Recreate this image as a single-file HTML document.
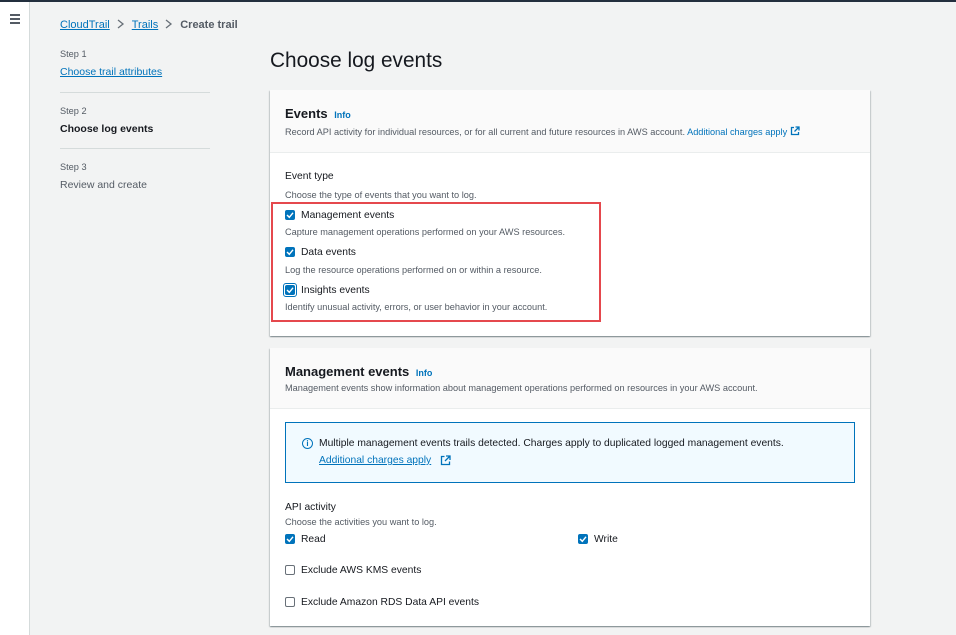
<!DOCTYPE html>
<html><head><meta charset="utf-8"><style>
*{box-sizing:border-box;margin:0;padding:0}
body{width:956px;height:635px;overflow:hidden;background:#f2f3f3;font-family:"Liberation Sans",Arial,sans-serif;color:#16191f;position:relative}
.abs{position:absolute;white-space:nowrap}
a,.link{color:#0073bb;text-decoration:underline}
.top{position:absolute;left:0;top:0;width:956px;height:2px;background:#232f3e}
.side{position:absolute;left:0;top:2px;width:30px;height:633px;background:#fff;border-right:1px solid #d5dbdb}
.card{position:absolute;left:270px;width:600px;background:#fff;box-shadow:0 1px 1px rgba(0,28,36,.3),1px 1px 1px rgba(0,28,36,.15),-1px 1px 1px rgba(0,28,36,.15)}
.hdr{position:absolute;left:0;top:0;width:600px;background:#fafafa;border-bottom:1px solid #eaeded}
.cb{position:absolute;width:10px;height:10px;background:#0073bb;border-radius:2px}
.cb svg{position:absolute;left:1px;top:1px}
.ub{position:absolute;width:10px;height:10px;border:1px solid #687078;border-radius:2px;background:#fff}
.s{font-size:9.2px;color:#545b64}
.l{font-size:10.3px;color:#16191f}
.sep{position:absolute;left:60px;width:150px;height:1px;background:#d5dbdb}
</style></head><body>
<div class="top"></div>
<div class="side"><div style="position:absolute;left:10px;top:12px;width:10px">
<div style="height:1.5px;background:#545b64;margin-bottom:2.5px"></div><div style="height:1.5px;background:#545b64;margin-bottom:2.5px"></div><div style="height:1.5px;background:#545b64"></div></div></div>

<div class="abs" style="left:60px;top:19px;font-size:11px"><span class="link">CloudTrail</span><svg width="22" height="10" style="vertical-align:-1px"><path d="M8 1 L13 5 L8 9" stroke="#687078" stroke-width="1.3" fill="none"/></svg><span class="link">Trails</span><svg width="22" height="10" style="vertical-align:-1px"><path d="M8 1 L13 5 L8 9" stroke="#687078" stroke-width="1.3" fill="none"/></svg><span style="color:#545b64;font-weight:bold">Create trail</span></div>

<div class="abs s" style="left:60px;top:49px">Step 1</div>
<div class="abs link" style="left:60px;top:66px;font-size:10.5px">Choose trail attributes</div>
<div class="sep" style="top:92px"></div>
<div class="abs s" style="left:60px;top:106px">Step 2</div>
<div class="abs" style="left:60px;top:123px;font-size:10.5px;font-weight:bold">Choose log events</div>
<div class="sep" style="top:148px"></div>
<div class="abs s" style="left:60px;top:162px">Step 3</div>
<div class="abs" style="left:60px;top:179px;font-size:10.5px;color:#545b64">Review and create</div>

<div class="abs" style="left:270px;top:49px;font-size:20.8px">Choose log events</div>

<div class="card" style="top:90px;height:246px">
<div class="hdr" style="height:63px"></div>
<div class="abs" style="left:15px;top:16px;font-size:13px;font-weight:bold">Events <span style="font-size:9px;color:#0073bb;margin-left:3px">Info</span></div>
<div class="abs s" style="left:15px;top:36px">Record API activity for individual resources, or for all current and future resources in AWS account. <span style="color:#0073bb">Additional charges apply</span> <svg width="10" height="10" style="vertical-align:-1px"><path d="M4 1.5 H1.5 V8.5 H8.5 V6 M5.5 1 H9 V4.5 M9 1 L4.5 5.5" stroke="#0073bb" stroke-width="1.3" fill="none"/></svg></div>
<div class="abs l" style="left:15px;top:81px">Event type</div>
<div class="abs s" style="left:15px;top:100px">Choose the type of events that you want to log.</div>
<div class="cb" style="left:15px;top:120px"><svg width="8" height="8"><path d="M1 4 L3.3 6.3 L7 1.8" stroke="#fff" stroke-width="1.4" fill="none"/></svg></div>
<div class="abs l" style="left:31px;top:120px">Management events</div>
<div class="abs s" style="left:15px;top:137px">Capture management operations performed on your AWS resources.</div>
<div class="cb" style="left:15px;top:157px"><svg width="8" height="8"><path d="M1 4 L3.3 6.3 L7 1.8" stroke="#fff" stroke-width="1.4" fill="none"/></svg></div>
<div class="abs l" style="left:31px;top:157px">Data events</div>
<div class="abs s" style="left:15px;top:175px">Log the resource operations performed on or within a resource.</div>
<div style="position:absolute;left:13px;top:193px;width:14px;height:14px;border:1.5px solid #0073bb;border-radius:3px"></div>
<div class="cb" style="left:15px;top:195px"><svg width="8" height="8"><path d="M1 4 L3.3 6.3 L7 1.8" stroke="#fff" stroke-width="1.4" fill="none"/></svg></div>
<div class="abs l" style="left:31px;top:195px">Insights events</div>
<div class="abs s" style="left:15px;top:212px">Identify unusual activity, errors, or user behavior in your account.</div>
<div style="position:absolute;left:1px;top:112px;width:330px;height:120px;border:2px solid #e5484d"></div>
</div>

<div class="card" style="top:348px;height:278px">
<div class="hdr" style="height:61px"></div>
<div class="abs" style="left:15px;top:16px;font-size:13px;font-weight:bold">Management events <span style="font-size:9px;color:#0073bb;margin-left:3px">Info</span></div>
<div class="abs s" style="left:15px;top:35px">Management events show information about management operations performed on resources in your AWS account.</div>
<div style="position:absolute;left:15px;top:74px;width:570px;height:61px;background:#f1faff;border:1px solid #0073bb"></div>
<div style="position:absolute;left:32px;top:90px;width:11px;height:11px;border:1.3px solid #0073bb;border-radius:50%;color:#0073bb;font-size:8px;font-weight:bold;text-align:center;line-height:9px">i</div>
<div class="abs l" style="left:49px;top:90px">Multiple management events trails detected. Charges apply to duplicated logged management events.</div>
<div class="abs link" style="left:49px;top:107px;font-size:10.3px">Additional charges apply</div>
<svg class="abs" style="left:170px;top:107px" width="11" height="11"><path d="M4.5 1.5 H1.5 V9.5 H9.5 V6.5 M6 1 H10 V5 M10 1 L5 6" stroke="#0073bb" stroke-width="1.3" fill="none"/></svg>
<div class="abs l" style="left:15px;top:154px">API activity</div>
<div class="abs s" style="left:15px;top:169px">Choose the activities you want to log.</div>
<div class="cb" style="left:15px;top:186px"><svg width="8" height="8"><path d="M1 4 L3.3 6.3 L7 1.8" stroke="#fff" stroke-width="1.4" fill="none"/></svg></div>
<div class="abs l" style="left:31px;top:186px">Read</div>
<div class="cb" style="left:308px;top:186px"><svg width="8" height="8"><path d="M1 4 L3.3 6.3 L7 1.8" stroke="#fff" stroke-width="1.4" fill="none"/></svg></div>
<div class="abs l" style="left:324px;top:186px">Write</div>
<div class="ub" style="left:15px;top:217px"></div>
<div class="abs l" style="left:31px;top:217px">Exclude AWS KMS events</div>
<div class="ub" style="left:15px;top:249px"></div>
<div class="abs l" style="left:31px;top:249px">Exclude Amazon RDS Data API events</div>
</div>
</body></html>
